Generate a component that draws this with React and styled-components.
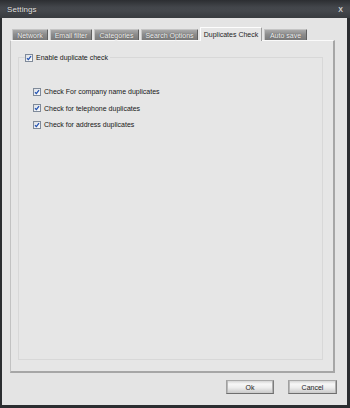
import React from "react";
import styled, { createGlobalStyle } from "styled-components";

const Global = createGlobalStyle`
  html, body { margin: 0; padding: 0; background: #2b2d30; }
  body { font-family: "Liberation Sans", Arial, sans-serif; }
  * { box-sizing: border-box; }
`;

const Window = styled.div`
  width: 350px;
  height: 408px;
  background: #2b2d30;
  display: flex;
  flex-direction: column;
  padding: 0 3px 3px 2px;
`;

const TitleBar = styled.div`
  height: 18px;
  margin: 0 -3px 0 -2px;
  padding: 0 7px;
  display: flex;
  align-items: center;
  justify-content: space-between;
  background: linear-gradient(to bottom, #2c2e32 0%, #43464b 40%, #44474c 60%, #383b3f 100%);
`;

const Title = styled.span`
  color: #e6e6e6;
  font-size: 8px;
  letter-spacing: 0.1px;
  text-shadow: 0 0 1px #111;
`;

const Close = styled.span`
  color: #d0d0d0;
  font-size: 7px;
  font-weight: bold;
  font-family: "Liberation Sans", Arial, sans-serif;
  margin-top: 1px;
`;

const Body = styled.div`
  flex: 1;
  background: #e4e4e4;
  display: flex;
  flex-direction: column;
  padding: 9px 12px 11px 8px;
`;

const TabRow = styled.div`
  height: 13px;
  display: flex;
  align-items: flex-end;
  gap: 2px;
  padding-left: 2px;
  position: relative;
  z-index: 2;
`;

const Tab = styled.div`
  width: ${(p) => p.$w}px;
  height: ${(p) => (p.$active ? 14 : 11)}px;
  margin-bottom: ${(p) => (p.$active ? -1 : 0)}px;
  display: flex;
  align-items: center;
  justify-content: center;
  font-size: 7px;
  white-space: nowrap;
  border: 1px solid;
  border-bottom: none;
  border-radius: 1px 1px 0 0;
  ${(p) =>
    p.$active
      ? `
    background: #e6e6e6;
    border-color: #fdfdfd #9c9c9c #9c9c9c #fdfdfd;
    color: #1e1e1e;
    padding-bottom: 1px;
  `
      : `
    background: linear-gradient(to bottom, #a9a9a9 0%, #8c8c8c 45%, #7a7a7a 100%);
    border-color: #c4c4c4 #606060 #606060 #c4c4c4;
    color: #f6f6f6;
    text-shadow: 0 0 1px #3a3a3a;
  `}
`;

const Panel = styled.div`
  flex: 1;
  display: flex;
  flex-direction: column;
  background: #e6e6e6;
  border-style: solid;
  border-width: 1px 2px 2px 1px;
  border-color: #fafafa #a6a6a6 #a6a6a6 #c2c2c2;
  padding: 12px 10px 11px 7px;
`;

const Group = styled.fieldset`
  flex: 1;
  margin: 0;
  padding: 0;
  min-width: 0;
  border: 1px solid #d8d8d8;
`;

const Legend = styled.legend`
  margin-left: 6px;
  padding: 0 2px 0 0;
  height: 9px;
`;

const Options = styled.div`
  display: flex;
  flex-direction: column;
  gap: 7.5px;
  padding-left: 14px;
  margin-top: 25px;
`;

const CheckRow = styled.div`
  display: flex;
  align-items: center;
  gap: 3px;
  height: 9px;
`;

const Label = styled.span`
  font-size: 7px;
  color: #161616;
  white-space: nowrap;
  line-height: 9px;
`;

const ButtonRow = styled.div`
  margin-top: 7px;
  height: 14px;
  display: flex;
  justify-content: flex-end;
  gap: 14px;
  margin-right: -2px;
`;

const Button = styled.div`
  width: ${(p) => p.$w}px;
  height: 14px;
  display: flex;
  align-items: center;
  justify-content: center;
  font-size: 7px;
  color: #1e1e1e;
  border: 1px solid;
  border-color: #a8a8a8 #7c7c7c #6e6e6e #a0a0a0;
  background: linear-gradient(to bottom, #d6d6d6 0%, #f7f7f7 25%, #ededed 55%, #c9c9c9 100%);
  box-shadow: inset 1px 0 0 #b8b8b8, inset -1px 0 0 #b0b0b0;
`;

const Check = () => (
  <svg width="8" height="8" viewBox="0 0 8 8">
    <defs>
      <linearGradient id="cbg" x1="0" y1="0" x2="1" y2="1">
        <stop offset="0" stopColor="#d9dde3" />
        <stop offset="1" stopColor="#ffffff" />
      </linearGradient>
    </defs>
    <rect x="0.5" y="0.5" width="7" height="7" fill="url(#cbg)" stroke="#7f8a99" />
    <path d="M2 4.2 L3.4 5.6 L6 2.2" fill="none" stroke="#2453b3" strokeWidth="1.3" />
  </svg>
);

const tabs = [
  { label: "Network", w: 36 },
  { label: "Email filter", w: 42 },
  { label: "Categories", w: 45 },
  { label: "Search Options", w: 57 },
  { label: "Duplicates Check", w: 62, active: true },
  { label: "Auto save", w: 43 },
];

const options = [
  "Check For company name duplicates",
  "Check for telephone duplicates",
  "Check for address duplicates",
];

export default function App() {
  return (
    <>
      <Global />
      <Window>
        <TitleBar>
          <Title>Settings</Title>
          <Close>X</Close>
        </TitleBar>
        <Body>
          <TabRow>
            {tabs.map((t) => (
              <Tab key={t.label} $w={t.w} $active={t.active}>
                {t.label}
              </Tab>
            ))}
          </TabRow>
          <Panel>
            <Group>
              <Legend>
                <CheckRow>
                  <Check />
                  <Label>Enable duplicate check</Label>
                </CheckRow>
              </Legend>
              <Options>
                {options.map((o) => (
                  <CheckRow key={o}>
                    <Check />
                    <Label>{o}</Label>
                  </CheckRow>
                ))}
              </Options>
            </Group>
          </Panel>
          <ButtonRow>
            <Button $w={48}>Ok</Button>
            <Button $w={49}>Cancel</Button>
          </ButtonRow>
        </Body>
      </Window>
    </>
  );
}
